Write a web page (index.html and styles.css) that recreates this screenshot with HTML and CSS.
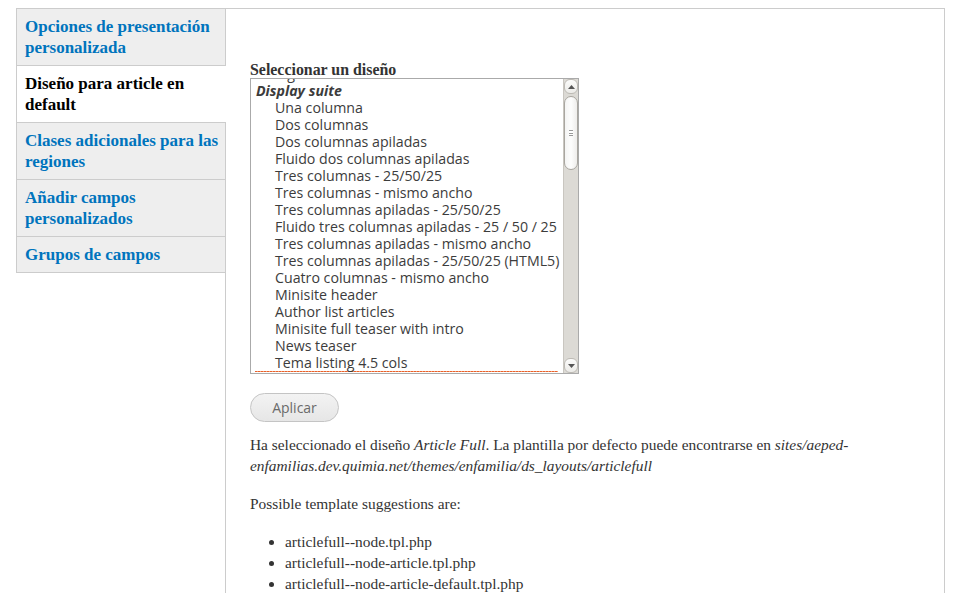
FILE: index.html
```html
<!DOCTYPE html>
<html lang="es">
<head>
<meta charset="utf-8">
<title>Diseño</title>
<link rel="stylesheet" href="styles.css">
</head>
<body>
<div class="page">
  <div class="vtabs">
    <ul class="vtabs-list">
      <li class="vtab"><a href="#">Opciones de presentación personalizada</a></li>
      <li class="vtab active"><a href="#">Diseño para article en default</a></li>
      <li class="vtab"><a href="#">Clases adicionales para las regiones</a></li>
      <li class="vtab"><a href="#">Añadir campos personalizados</a></li>
      <li class="vtab"><a href="#">Grupos de campos</a></li>
    </ul>
    <div class="pane">
      <label class="field-label">Seleccionar un diseño</label>
      <div class="listbox">
        <div class="viewport">
          <div class="options">
            <div class="opt">- Ninguno -</div>
            <div class="optgroup">Display suite</div>
            <div class="opt sub">Una columna</div>
            <div class="opt sub">Dos columnas</div>
            <div class="opt sub">Dos columnas apiladas</div>
            <div class="opt sub">Fluido dos columnas apiladas</div>
            <div class="opt sub">Tres columnas - 25/50/25</div>
            <div class="opt sub">Tres columnas - mismo ancho</div>
            <div class="opt sub">Tres columnas apiladas - 25/50/25</div>
            <div class="opt sub">Fluido tres columnas apiladas - 25 / 50 / 25</div>
            <div class="opt sub">Tres columnas apiladas - mismo ancho</div>
            <div class="opt sub">Tres columnas apiladas - 25/50/25 (HTML5)</div>
            <div class="opt sub">Cuatro columnas - mismo ancho</div>
            <div class="opt sub">Minisite header</div>
            <div class="opt sub">Author list articles</div>
            <div class="opt sub">Minisite full teaser with intro</div>
            <div class="opt sub">News teaser</div>
            <div class="opt sub">Tema listing 4.5 cols</div>
            <div class="opt sub selected">Article Full</div>
          </div>
        </div>
        <div class="scrollbar">
          <div class="sb-btn sb-up"><svg width="7" height="4" viewBox="0 0 7 4"><path d="M0 4 L3.5 0 L7 4 Z" fill="#555"/></svg></div>
          <div class="sb-track">
            <div class="sb-thumb"><span class="grip"></span></div>
          </div>
          <div class="sb-btn sb-down"><svg width="7" height="4" viewBox="0 0 7 4"><path d="M0 0 L3.5 4 L7 0 Z" fill="#555"/></svg></div>
        </div>
      </div>
      <button class="btn" type="button">Aplicar</button>
      <p class="desc">Ha seleccionado el diseño <em>Article Full</em>. La plantilla por defecto puede encontrarse en <em>sites/aeped-enfamilias.dev.quimia.net/themes/enfamilia/ds_layouts/articlefull</em></p>
      <p class="desc">Possible template suggestions are:</p>
      <ul class="suggestions">
        <li>articlefull--node.tpl.php</li>
        <li>articlefull--node-article.tpl.php</li>
        <li>articlefull--node-article-default.tpl.php</li>
      </ul>
    </div>
  </div>
</div>
</body>
</html>
```

FILE: styles.css
```css
html, body {
  margin: 0;
  padding: 0;
  background: #fff;
}
body {
  font-family: "Liberation Serif", "DejaVu Serif", serif;
  color: #333;
  font-size: 15.4px;
}
.page {
  padding: 8px 16px 0 16px;
  width: 929px;
}
.vtabs {
  display: flex;
  align-items: flex-start;
  border-top: 1px solid #ccc;
  border-right: 1px solid #ccc;
  height: 700px;
}
.vtabs-list {
  list-style: none;
  margin: 0;
  padding: 0;
  width: 208px;
  flex: none;
  border-left: 1px solid #ccc;
  position: relative;
  z-index: 1;
}
.vtab {
  background: #eee;
  border-bottom: 1px solid #ccc;
  padding: 7px 1px 7px 8px;
  line-height: 21px;
  font-size: 17px;
  font-weight: bold;
}
.vtab a {
  color: #0074bd;
  text-decoration: none;
}
.vtab.active {
  background: #fff;
  margin-right: -1px;
  padding-right: 2px;
}
.vtab.active a {
  color: #000;
}
.pane {
  flex: 1;
  align-self: stretch;
  border-left: 1px solid #ccc;
  padding: 52px 24px 0 24px;
}
.field-label {
  display: block;
  font-weight: bold;
  font-size: 15.9px;
  line-height: 17px;
  color: #333;
}
.listbox {
  width: 327px;
  height: 294px;
  border: 1px solid #aaa;
  display: flex;
  background: #fff;
}
.viewport {
  flex: 1;
  overflow: hidden;
}
.options {
  margin-top: -14px;
  font-family: "Open Sans", "DejaVu Sans", sans-serif;
  font-size: 14.2px;
  color: #3c3c3c;
}
.opt, .optgroup {
  height: 17px;
  line-height: 17px;
  white-space: nowrap;
  padding-left: 5px;
}
.optgroup {
  font-weight: bold;
  font-style: italic;
}
.opt.sub {
  padding-left: 24px;
}
.opt.selected {
  margin-left: 4px;
  margin-right: 5px;
  padding-left: 20px;
  background: repeating-linear-gradient(90deg, #e8612a 0 2px, #f29a74 2px 3px) top left / 100% 1px no-repeat;
}
.scrollbar {
  width: 14px;
  flex: none;
  background: #dcdad5;
  border-left: 1px solid #c9c6c0;
  display: flex;
  flex-direction: column;
}
.sb-btn {
  height: 15px;
  background: linear-gradient(#fbfbfa, #ecebe8);
  border: 1px solid #bdbab4;
  border-radius: 6px;
  display: flex;
  align-items: center;
  justify-content: center;
  box-sizing: border-box;
}
.sb-track {
  flex: 1;
  padding-top: 2px;
}
.sb-thumb {
  height: 74px;
  background: linear-gradient(90deg, #f4f4f3, #fdfdfd 50%, #eeedeb);
  border: 1px solid #a9a6a0;
  border-radius: 7px;
  box-sizing: border-box;
  display: flex;
  align-items: center;
  justify-content: center;
}
.grip {
  width: 4px;
  height: 6px;
  border-top: 1px solid #999;
  border-bottom: 1px solid #999;
  box-sizing: border-box;
  background: linear-gradient(#fff 2px, #999 2px, #999 3px, #fff 3px);
}
.btn {
  display: block;
  margin-top: 19px;
  width: 89px;
  height: 29px;
  border: 1px solid #c4c4c4;
  border-radius: 15px;
  background: linear-gradient(#f3f3f3, #e6e6e6);
  color: #6a6a6a;
  font-family: "Open Sans", "DejaVu Sans", sans-serif;
  font-size: 14px;
  padding: 0;
}
.desc {
  margin: 12px 0 17px 0;
  line-height: 21px;
}
.desc + .desc {
  margin-top: 17px;
}
.suggestions {
  margin: 17px 0 0 0;
  padding-left: 35px;
  line-height: 21px;
}
```
